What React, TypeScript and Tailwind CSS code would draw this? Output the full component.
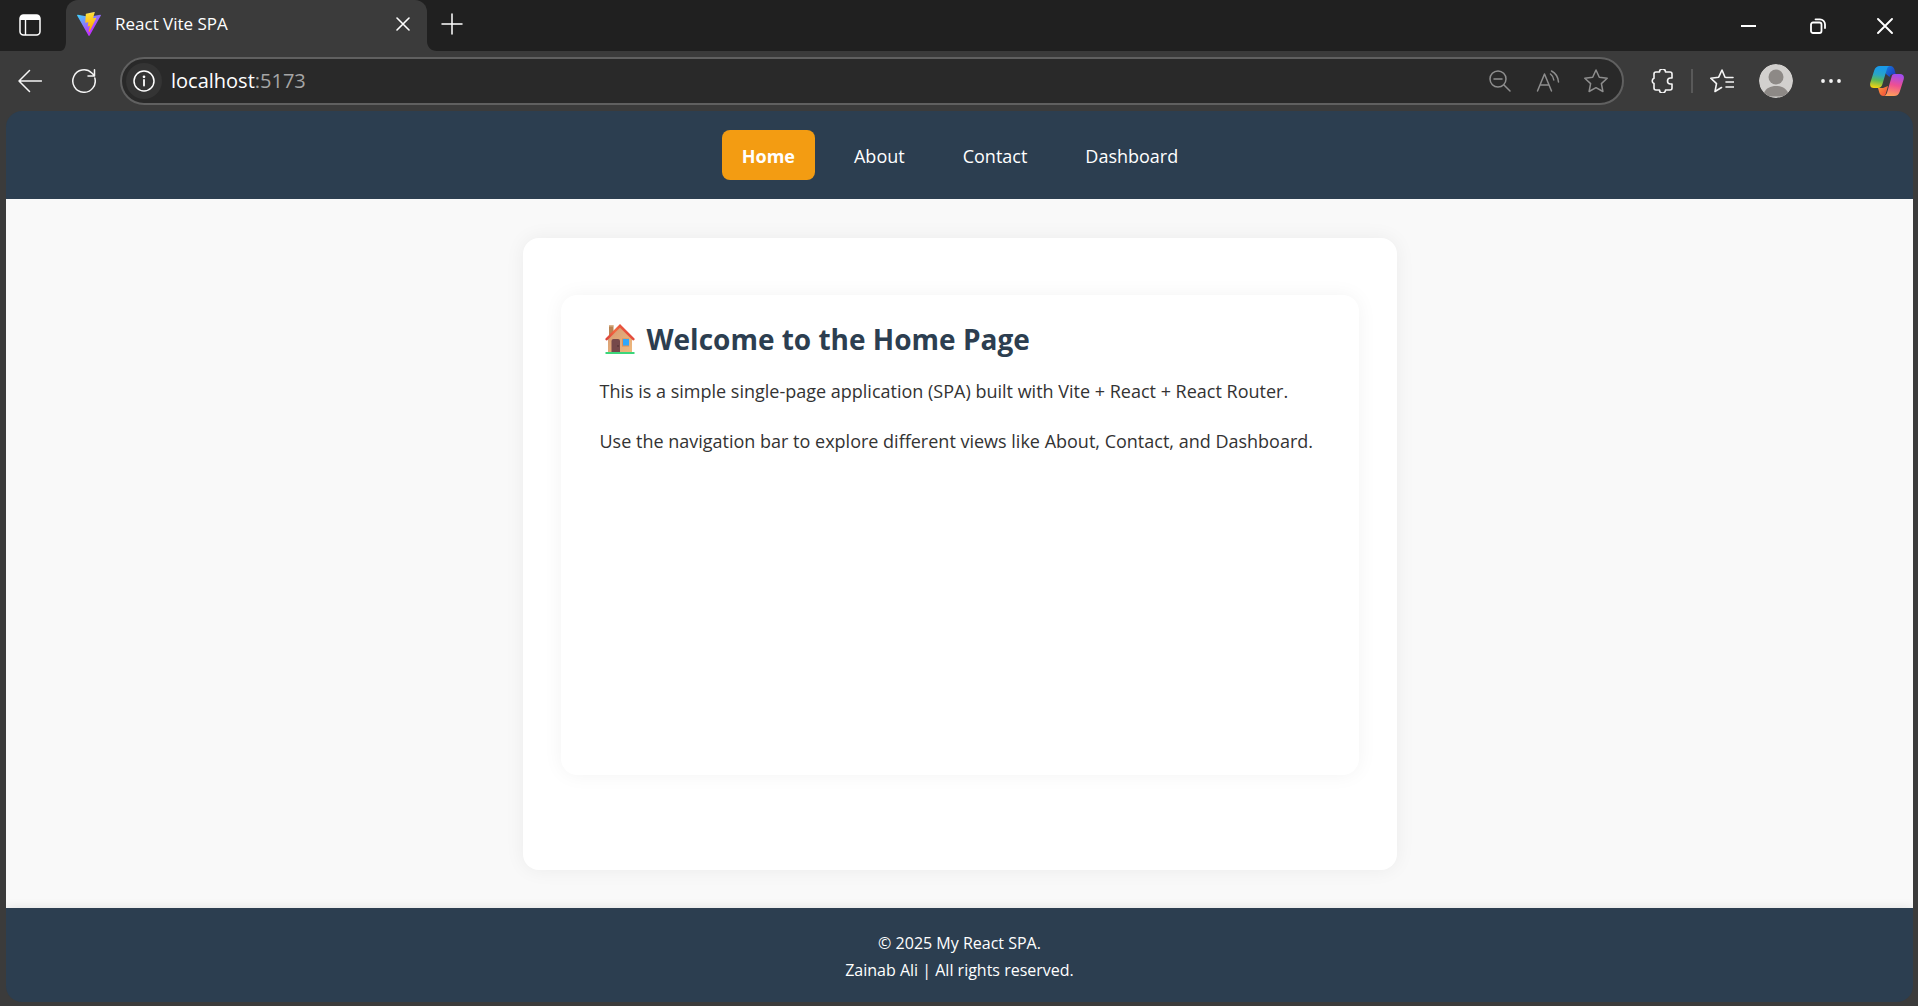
import React from "react";

const stroke = { fill: "none", stroke: "currentColor", strokeLinecap: "round", strokeLinejoin: "round" } as const;

function ViteLogo() {
  return (
    <svg className="h-6 w-6" viewBox="0 0 256 257" aria-hidden="true">
      <defs>
        <linearGradient id="viteA" x1="-.828%" x2="57.636%" y1="7.652%" y2="78.411%">
          <stop offset="0%" stopColor="#41D1FF" />
          <stop offset="100%" stopColor="#BD34FE" />
        </linearGradient>
        <linearGradient id="viteB" x1="43.376%" x2="50.316%" y1="2.242%" y2="89.03%">
          <stop offset="0%" stopColor="#FFEA83" />
          <stop offset="8.333%" stopColor="#FFDD35" />
          <stop offset="100%" stopColor="#FFA800" />
        </linearGradient>
      </defs>
      <path fill="url(#viteA)" d="M255.153 37.938L134.897 252.976c-2.483 4.44-8.862 4.466-11.382.048L.875 37.958c-2.746-4.814 1.371-10.646 6.827-9.67l120.385 21.517a6.537 6.537 0 0 0 2.322-.004l117.867-21.483c5.438-.991 9.574 4.796 6.877 9.62Z" />
      <path fill="url(#viteB)" d="M185.432.063L96.44 17.501a3.268 3.268 0 0 0-2.634 3.014l-5.474 92.456a3.268 3.268 0 0 0 3.997 3.378l24.777-5.718c2.318-.535 4.413 1.507 3.936 3.838l-7.361 36.047c-.495 2.426 1.782 4.5 4.151 3.78l15.304-4.649c2.372-.72 4.652 1.36 4.15 3.788l-11.698 56.621c-.732 3.542 3.979 5.473 5.943 2.437l1.313-2.028l72.516-144.72c1.215-2.423-.88-5.186-3.54-4.672l-25.505 4.922c-2.396.462-4.435-1.77-3.759-4.114l16.646-57.705c.677-2.35-1.37-4.583-3.769-4.113Z" />
    </svg>
  );
}

function CopilotLogo() {
  return (
    <svg className="h-[30px] w-[34px]" viewBox="0 0 34 30" aria-hidden="true">
      <defs>
        <linearGradient id="cpL" x1="0.5" y1="0" x2="0.35" y2="1">
          <stop offset="0.1" stopColor="#1a9be8" />
          <stop offset="0.4" stopColor="#2aa5c5" />
          <stop offset="0.65" stopColor="#5cb85a" />
          <stop offset="1" stopColor="#f5d410" />
        </linearGradient>
        <linearGradient id="cpT" x1="0" y1="0" x2="1" y2="0.6">
          <stop offset="0" stopColor="#1590e6" />
          <stop offset="1" stopColor="#1d3fc0" />
        </linearGradient>
        <linearGradient id="cpR" x1="0.6" y1="0" x2="0.4" y2="1">
          <stop offset="0" stopColor="#a04cf0" />
          <stop offset="0.5" stopColor="#ef4f92" />
          <stop offset="1" stopColor="#ffa05a" />
        </linearGradient>
        <linearGradient id="cpB" x1="0" y1="0" x2="1" y2="1">
          <stop offset="0" stopColor="#ff9a3c" />
          <stop offset="1" stopColor="#f0443a" />
        </linearGradient>
      </defs>
      <path fill="url(#cpT)" d="M11 0h9.5c2 0 3.3 1.3 3.900 3.2L25.7 8h-2.2c-2 0-3.4 1-4 3L16 8z" />
      <path fill="url(#cpB)" d="M8 22h5l5-2-2 7c-.6 2-1 3-2.5 3-2.3 0-3.5-1.500-4.2-3.5z" />
      <path fill="url(#cpL)" d="M10 0h10c-1.7 0-2.6 1.5-3.2 3.4l-4.5 15.2C11.6 21 10.3 22 8 22H4c-3 0-4.500-2-3.7-5.2L4.200 4.5C5.2 1.5 7 0 10 0z" />
      <path fill="url(#cpR)" d="M24.5 8H30c3 0 4.5 2 3.7 5.2l-3.9 12.3C28.8 28.500 27 30 24 30H13.500c2 0 3-1.5 3.6-3.4l4.3-15.2C22.1 9 22.5 8 24.5 8z" />
    </svg>
  );
}

function House() {
  return (
    <svg className="ml-[5px] mr-1 h-[30px] w-[30px] shrink-0" viewBox="0 0 30 30" role="img" aria-label="House">
      <defs>
        <linearGradient id="roof" x1="0" y1="1" x2="1" y2="0.6">
          <stop offset="0" stopColor="#d83c3a" />
          <stop offset="0.5" stopColor="#f5693f" />
          <stop offset="1" stopColor="#dc3e3a" />
        </linearGradient>
        <linearGradient id="wall" x1="0" y1="0" x2="1" y2="1">
          <stop offset="0" stopColor="#d49a74" />
          <stop offset="1" stopColor="#efb87c" />
        </linearGradient>
      </defs>
      <path fill="#b98453" d="M4 1.5h4.5V11H4z" />
      <path fill="#d9b48d" d="M4 1h4.5v1.5H4z" />
      <path fill="url(#wall)" d="M3 14L15 3l12 11v14H3z" />
      <path fill="url(#roof)" d="M15 0l14.5 14.500c.5.8-.2 2.200-1.5 2L15 3.800 2 16.500c-1.300.2-2-1.200-1.500-2z" />
      <path fill="#75494a" d="M6.500 17a2 2 0 012-2H13a2 2 0 012 2v11H6.500z" />
      <circle cx="13" cy="22" r=".8" fill="#4a2c2c" />
      <path fill="#dd8f55" d="M17 14.500h7v8h-7z" />
      <path fill="#2ea8fb" d="M18 15h6v6.500h-6z" />
      <path fill="#3bd67b" d="M.5 28h29v2H.5z" />
    </svg>
  );
}

const iconBtn = "flex shrink-0 items-center justify-center";

function TitleBar() {
  return (
    <header className="flex h-[51px] bg-[#202020] text-white">
      <button aria-label="Tab actions" className={`${iconBtn} w-[60px] pb-0.5`}>
        <svg className="h-[22px] w-[22px]" viewBox="0 0 22 22">
          <rect x="1" y="1" width="20" height="20" rx="3.5" fill="none" stroke="currentColor" strokeWidth="1.5" />
          <path d="M1 6V4a3 3 0 013-3h14a3 3 0 013 3v2z" fill="currentColor" />
          <path d="M6.500 6v15" stroke="currentColor" strokeWidth="1.4" />
        </svg>
      </button>
      <div className="flex">
        <svg className="self-end" width="6" height="10" viewBox="0 0 6 10" aria-hidden="true">
          <path fill="#3b3b3b" d="M6 0v10H0c4 0 6-4 6-10z" />
        </svg>
        <div className="flex w-[361px] items-center rounded-t-xl bg-[#3b3b3b] pr-2.5 pb-1 pl-[11px]">
          <ViteLogo />
          <span className="ml-3.5 flex-1 text-[17px] leading-6">React Vite SPA</span>
          <button aria-label="Close tab" className={`${iconBtn} h-7 w-7`}>
            <svg className="h-3.5 w-3.5" viewBox="0 0 14 14" {...stroke} strokeWidth="1.6"><path d="M1 1l12 12M13 1L1 13" /></svg>
          </button>
        </div>
        <svg className="self-end" width="10" height="10" viewBox="0 0 10 10" aria-hidden="true">
          <path fill="#3b3b3b" d="M0 0v10h10C4 10 0 6 0 0z" />
        </svg>
      </div>
      <button aria-label="New tab" className={`${iconBtn} w-[30px] pb-1`}>
        <svg className="h-[22px] w-[22px]" viewBox="0 0 22 22" {...stroke} strokeWidth="1.5"><path d="M11 1v20M1 11h20" /></svg>
      </button>
      <div className="ml-auto flex">
        <button aria-label="Minimize" className={`${iconBtn} w-[69px]`}>
          <svg className="h-4 w-4" viewBox="0 0 16 16" {...stroke} strokeWidth="2"><path d="M0 8h15" strokeLinecap="butt" /></svg>
        </button>
        <button aria-label="Restore" className={`${iconBtn} w-[69px]`}>
          <svg className="h-4 w-4" viewBox="0 0 16 16" {...stroke} strokeWidth="1.8">
            <rect x="1" y="4.5" width="10.500" height="10.500" rx="2" />
            <path d="M5.500 1.300h4.500a5 5 0 015 5v3.700" />
          </svg>
        </button>
        <button aria-label="Close" className={`${iconBtn} w-[66px]`}>
          <svg className="h-4 w-4" viewBox="0 0 16 16" {...stroke} strokeWidth="1.9"><path d="M1 1l14 14M15 1L1 15" /></svg>
        </button>
      </div>
    </header>
  );
}

function Toolbar() {
  return (
    <div className="flex h-[60px] items-center bg-[#3b3b3b] pr-3.5 pl-4 text-[#f5f5f5]">
      <button aria-label="Back" className={`${iconBtn} h-7 w-7`}>
        <svg className="h-6 w-6" viewBox="0 0 24 24" {...stroke} strokeWidth="1.5"><path d="M23.500 12H1M11.500 1.500L1 12l10.500 10.500" /></svg>
      </button>
      <button aria-label="Refresh" className={`${iconBtn} ml-[26px] h-7 w-7`}>
        <svg className="h-6 w-6" viewBox="0 0 24 24" {...stroke} strokeWidth="1.5"><path d="M22.800 9A11.200 11.200 0 1 1 19.800 4l2.500 2.500M22.500 .8V7h-6.500" /></svg>
      </button>
      <form className="ml-[22px] flex h-12 flex-1 items-center rounded-full border-2 border-[#606060] bg-[#292929] pr-3.5 pl-1 text-[#8e8e8e]">
        <button type="button" aria-label="Site information" className={`${iconBtn} h-9 w-9 rounded-full bg-[#343434] text-white`}>
          <svg className="h-[22px] w-[22px]" viewBox="0 0 22 22" {...stroke} strokeWidth="1.5">
            <circle cx="11" cy="11" r="10" />
            <path d="M11 10v5.500" strokeWidth="1.8" />
            <circle cx="11" cy="6.800" r=".6" fill="currentColor" />
          </svg>
        </button>
        <a href="#home" className="ml-[9px] flex-1 text-xl leading-6 text-[#a5a5a5]"><span className="text-white">localhost</span>:5173</a>
        <button type="button" aria-label="Zoom out" className={`${iconBtn} w-6`}>
          <svg className="h-[22px] w-[22px]" viewBox="0 0 22 22" {...stroke} strokeWidth="1.5"><circle cx="9" cy="9" r="8" /><path d="M15 15l6 6M5 9h8" /></svg>
        </button>
        <button type="button" aria-label="Read aloud" className={`${iconBtn} ml-6 w-6`}>
          <svg className="h-[22px] w-6" viewBox="0 0 24 22" {...stroke} strokeWidth="1.5"><path d="M1.500 21L8.500 4l7 17M4 15h9M14.500 4c1.600 1.200 2.900 3.200 3.300 6M15.500 1c3.500 1.800 6.500 6 7 11" /></svg>
        </button>
        <button type="button" aria-label="Add to favorites" className={`${iconBtn} ml-6 w-6`}>
          <svg className="h-6 w-6" viewBox="0 0 24 24" {...stroke} strokeWidth="1.5"><path d="M12 1l3.300 7.200 7.900 1-5.800 5.400 1.500 7.900L12 18.700l-6.900 3.800 1.500-7.900L.8 9.200l7.900-1z" /></svg>
        </button>
      </form>
      <button aria-label="Extensions" className={`${iconBtn} ml-[26px] w-6`}>
        <svg className="h-6 w-6" viewBox="0 0 24 24" {...stroke} strokeWidth="1.6">
          <path d="M4 5a2 2 0 012-2h3.500a3 3 0 016 0H20a2 2 0 012 2v4h-1.500a3 3 0 000 6H22v4a2 2 0 01-2 2h-4.500a3 3 0 01-6 0H6a2 2 0 01-2-2v-4.500a2.800 2.800 0 010-5.200z" />
        </svg>
      </button>
      <div className="ml-[17px] h-6 w-0.5 bg-[#595959]" />
      <button aria-label="Favorites" className={`${iconBtn} ml-[17px] w-6`}>
        <svg className="h-6 w-6" viewBox="0 0 24 24" {...stroke} strokeWidth="1.6"><path d="M11.500 18.500L5 22.500l1.500-7.900L.8 9.200l7.900-1L12 1l3 7.200 1.500.3M16 8.500h7M16 13h7.500M16 18h7.500" /></svg>
      </button>
      <button aria-label="Profile" className="ml-[25px] shrink-0 overflow-hidden rounded-full">
        <svg className="h-[34px] w-[34px]" viewBox="0 0 34 34"><circle cx="17" cy="17" r="17" fill="#d2d0ce" /><circle cx="17" cy="13" r="7.500" fill="#8d8986" /><path d="M5 29c2-5 6.500-7 12-7s10 2 12 7l-5 3.500H10z" fill="#8d8986" /></svg>
      </button>
      <button aria-label="Settings and more" className={`${iconBtn} ml-[26px] w-6`}>
        <svg className="h-6 w-6" viewBox="0 0 24 24" fill="currentColor"><circle cx="4" cy="12" r="1.900" /><circle cx="12" cy="12" r="1.900" /><circle cx="20" cy="12" r="1.900" /></svg>
      </button>
      <button aria-label="Copilot" className={`${iconBtn} ml-[27px]`}><CopilotLogo /></button>
    </div>
  );
}

const links = ["About", "Contact", "Dashboard"];

export default function App() {
  return (
    <div className="flex min-h-screen flex-col bg-[#3b3b3b] [font-family:'Open_Sans',sans-serif]">
      <TitleBar />
      <Toolbar />
      <div className="mr-[5px] mb-1 ml-1.5 flex flex-1 flex-col overflow-hidden rounded-2xl">
        <nav className="flex justify-center gap-5 bg-[#2c3e50] py-[19px] text-lg leading-7 text-white">
          <a href="#home" className="rounded-lg bg-[#f39c12] px-5 pt-3 pb-2.5 font-bold">Home</a>
          {links.map((label) => (
            <a key={label} href={`#${label.toLowerCase()}`} className="rounded-lg px-[19px] pt-3 pb-2.5">{label}</a>
          ))}
        </nav>
        <main className="flex flex-1 justify-center bg-[#f9f9f9] px-10 pt-[39px] pb-[38px]">
          <div className="w-full max-w-[874px] rounded-2xl bg-white px-[38px] pt-[57px] pb-[95px] shadow-[0_0_20px_rgba(0,0,0,0.06)]">
            <section className="h-full rounded-2xl bg-white px-[39px] pt-6 text-lg leading-[30px] text-[#333] shadow-[0_0_20px_rgba(0,0,0,0.05)]">
              <h1 className="flex items-center gap-2 text-[28px] leading-10 font-bold text-[#2c3e50]">
                <House />Welcome to the Home Page
              </h1>
              <p className="mt-[17px]">This is a simple single-page application (SPA) built with Vite + React + React Router.</p>
              <p className="mt-5">Use the navigation bar to explore different views like About, Contact, and Dashboard.</p>
            </section>
          </div>
        </main>
        <footer className="bg-[#2c3e50] pt-[22px] pb-[18px] text-center text-base leading-[27px] text-white shadow-[0_0_10px_rgba(0,0,0,0.1)]">
          <p>© 2025 My React SPA.</p>
          <p>Zainab Ali | All rights reserved.</p>
        </footer>
      </div>
    </div>
  );
}
